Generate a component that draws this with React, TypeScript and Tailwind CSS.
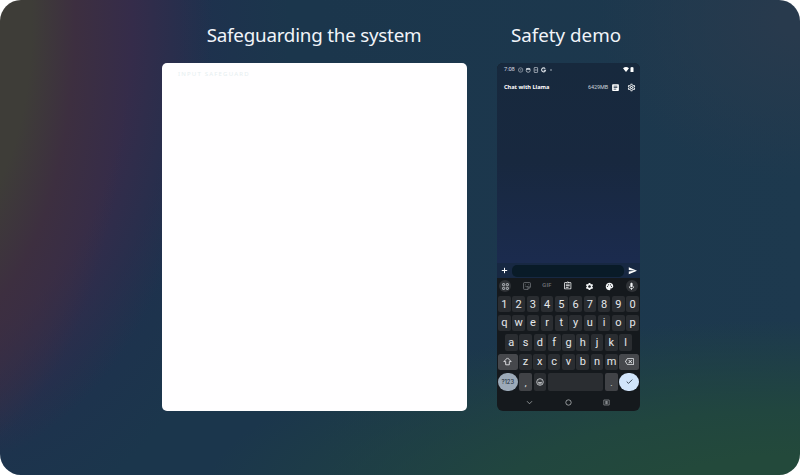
import React from 'react';
import { MdSettings, MdPalette, MdMic, MdSend, MdArticle } from 'react-icons/md';
import { MdOutlineSettings, MdOutlineBackspace, MdOutlineAssignment } from 'react-icons/md';

const key = 'flex items-center justify-center rounded-[2px] bg-[#2a2d31] text-[11px] leading-none text-[#e6e8eb]';

function Keys({ chars }: { chars: string }) {
  return (
    <>
      {chars.split('').map((c) => (
        <div key={c} className={`${key} w-[12.7px] shrink-0`}>{c}</div>
      ))}
    </>
  );
}

function StatusBar() {
  return (
    <div className="flex h-[13px] items-center pl-[7px] pr-[6px] text-[#d5dbe2]">
      <span className="w-[13.5px] whitespace-nowrap text-[5.8px] leading-none tracking-[-0.1px]">7:08</span>
      <svg className="h-[6px] w-[34px]" viewBox="0 0 34 6" fill="none" stroke="currentColor" strokeWidth=".7">
        <circle cx="2.6" cy="3" r="2.2" opacity=".7" />
        <path d="M1.7 2.4h1.8M1.8 3.8h1.6" strokeWidth=".5" opacity=".7" />
        <circle cx="10.2" cy="3.3" r="2" />
        <path d="M8.2 2h4" strokeWidth="1.4" />
        <rect x="16.2" y=".4" width="3.4" height="5.2" rx=".8" />
        <path d="M17 3h1.8" />
        <path d="M27.2 1.7A2 2 0 1 0 27.5 3.3H25.7" strokeWidth="1.1" />
        <circle cx="33" cy="3" r=".7" fill="currentColor" stroke="none" />
      </svg>
      <div className="ml-auto flex items-center gap-[1px] text-white">
        <svg className="h-[5px] w-[6px]" viewBox="0 0 6 5" fill="currentColor"><path d="M0 1.2Q3-1 6 1.2L3 5Z" /></svg>
        <svg className="h-[5px] w-[4px]" viewBox="0 0 4 5" fill="currentColor"><path d="M1.3 0h1.4v.6h.8V5H.5V.6h.8Z" /></svg>
      </div>
    </div>
  );
}

function Phone() {
  return (
    <div className="flex h-[348px] w-[143px] flex-col overflow-hidden rounded-[6px] bg-[#15191d] font-['Roboto',sans-serif]">
      <div className="flex h-[200px] shrink-0 flex-col bg-linear-to-b from-[#17293d] via-[#18283f] to-[#1b2b4e]">
        <StatusBar />
        <div className="mt-[5px] flex h-[13px] items-center pl-[7px] pr-1 text-white">
          <span className="whitespace-nowrap font-['Noto_Sans',sans-serif] text-[5.6px] font-bold leading-none">Chat with Llama</span>
          <span className="ml-auto w-[20px] whitespace-nowrap text-[5.5px] leading-none tracking-[-0.1px] text-[#cbd3db]">6429MB</span>
          <MdArticle className="ml-[3px] h-[9px] w-[9px]" />
          <MdOutlineSettings className="ml-[7px] h-[9px] w-[9px]" />
        </div>
      </div>
      <div className="flex h-[15px] shrink-0 items-center bg-[#172842] px-1 text-white">
        <svg className="h-[7px] w-[7px]" viewBox="0 0 7 7" stroke="currentColor" strokeWidth="1"><path d="M3.5.8v5.4M.8 3.5h5.4" /></svg>
        <div className="ml-1 h-[12px] w-[112px] rounded-[5px] bg-[#091b28]" />
        <MdSend className="ml-auto -mr-px h-[9.5px] w-[9.5px]" />
      </div>
      <div className="flex h-[17px] shrink-0 items-center justify-between pb-px pl-[2px] pr-[2px] text-[#f2f4f5]">
        <div className="flex h-[12px] w-[12px] items-center justify-center rounded-full bg-[#303337]">
          <svg className="h-[7px] w-[7px]" viewBox="0 0 7 7" fill="none" stroke="#b5b9bd" strokeWidth=".9">
            <rect x=".6" y=".6" width="2.1" height="2.1" rx=".4" /><rect x="4.3" y=".6" width="2.1" height="2.1" rx=".4" />
            <rect x=".6" y="4.3" width="2.1" height="2.1" rx=".4" /><rect x="4.3" y="4.3" width="2.1" height="2.1" rx=".4" />
          </svg>
        </div>
        <svg className="h-[8px] w-[8px]" viewBox="0 0 8 8" fill="none" stroke="#777b80" strokeWidth=".8">
          <path d="M1.3.6h5.4q.7 0 .7.7v3.8L5.1 7.4H1.3q-.7 0-.7-.7V1.3q0-.7.7-.7ZM5 7.2V5h2.2M2.4 2.7h.6M5 2.7h.6M2.3 4.1Q3.5 5.3 5 4.3" />
        </svg>
        <span className="text-[5.8px] font-medium leading-none tracking-[0.2px] text-[#73777c]">GIF</span>
        <MdOutlineAssignment className="h-[9.5px] w-[9.5px]" />
        <MdSettings className="h-[9px] w-[9px]" />
        <MdPalette className="h-[9px] w-[9px]" />
        <div className="flex h-[12px] w-[12px] items-center justify-center rounded-full bg-[#303337]"><MdMic className="h-[9px] w-[9px]" /></div>
      </div>
      <div className="flex flex-col px-px pt-px">
        <div className="flex h-[16px] justify-between"><Keys chars="1234567890" /></div>
        <div className="mt-[2.5px] flex h-[16.5px] justify-between"><Keys chars="qwertyuiop" /></div>
        <div className="mt-[3px] flex h-[16.5px] justify-between px-[7px]"><Keys chars="asdfghjkl" /></div>
        <div className="mt-[3px] flex h-[16.5px] justify-between">
          <div className="flex w-[19.5px] items-center justify-center rounded-[2.5px] bg-[#46484c]">
            <svg className="h-[9px] w-[9px]" viewBox="0 0 9 9" fill="none" stroke="#e6e8eb" strokeWidth=".9"><path d="M4.5.9 8.2 4.6H6.3V7.8H2.7V4.6H.8Z" strokeLinejoin="round" /></svg>
          </div>
          <Keys chars="zxcvbnm" />
          <div className="flex w-[19.5px] items-center justify-center rounded-[2.5px] bg-[#46484c]"><MdOutlineBackspace className="h-[9px] w-[9px] text-[#e6e8eb]" /></div>
        </div>
        <div className="mt-[2.5px] flex h-[18px] justify-between">
          <div className="flex w-[19.5px] items-center justify-center rounded-[9px] bg-[#9caab8] font-['Inter',sans-serif] text-[5.8px] font-medium leading-none text-[#27333f]">?123</div>
          <div className="flex w-[12.7px] items-center justify-center rounded-[2px] bg-[#414347] pt-1 text-[9px] leading-none text-[#e6e8eb]">,</div>
          <div className={`${key} w-[12.7px]`}>
            <svg className="h-[8px] w-[8px]" viewBox="0 0 8 8" fill="none" stroke="currentColor" strokeWidth=".75"><circle cx="4" cy="4" r="3.3" /><path d="M2.6 3h.6M4.8 3h.6M2.3 4.5h3.4Q5.4 6 4 6T2.3 4.5Z" /></svg>
          </div>
          <div className="w-[55px] rounded-[2px] bg-[#2a2d31]" />
          <div className="flex w-[12.7px] items-center justify-center rounded-[2px] bg-[#414347] pt-1 text-[9px] leading-none text-[#e6e8eb]">.</div>
          <div className="flex w-[19.5px] items-center justify-center rounded-[9px] bg-[#d2e5fb]">
            <svg className="h-[7px] w-[7px]" viewBox="0 0 7 7" fill="none" stroke="#26323e" strokeWidth=".85"><path d="m.7 3.6 1.8 1.8L6.3 1.6" /></svg>
          </div>
        </div>
      </div>
      <div className="mt-[8px] flex h-[8px] items-center justify-between pl-[29px] pr-[30px]">
        <svg className="h-[7px] w-[7px]" viewBox="0 0 7 7" fill="none" stroke="#a4a8ab" strokeWidth=".8"><path d="M1 2.2 3.5 4.8 6 2.2" /></svg>
        <svg className="h-[7px] w-[7px]" viewBox="0 0 7 7" fill="none" stroke="#b3b6b9" strokeWidth=".8"><circle cx="3.5" cy="3.5" r="2.7" /></svg>
        <svg className="h-[7px] w-[7px]" viewBox="0 0 7 7" fill="none" stroke="#85898d" strokeWidth=".8"><path d="M.8 1v5M6.2 1v5M.8 1h5.4M.8 6h5.4" /><rect x="2.3" y="1.8" width="2.4" height="3.4" fill="#85898d" stroke="none" /></svg>
      </div>
    </div>
  );
}

export default function App() {
  return (
    <div className="h-[475px] w-[800px] overflow-hidden bg-white">
      <main className="flex h-[475px] w-[800px] gap-[30px] overflow-hidden rounded-[21px] bg-[#1d394e] bg-[radial-gradient(ellipse_135px_310px_at_-60px_20px,#3e3d38_68%,#3d2f40_100%,transparent_142%),radial-gradient(ellipse_200px_330px_at_-60px_20px,#352c4a_96%,transparent_136%),radial-gradient(ellipse_280px_420px_at_-60px_20px,#1f304e_85%,transparent_125%),radial-gradient(ellipse_600px_180px_at_800px_500px,#23493b_25%,#21463f_50%,transparent_100%),radial-gradient(ellipse_200px_160px_at_800px_20px,#283a4d_10%,transparent_100%),linear-gradient(90deg,#1b364c_0%,#1b364c_40%,#1d394e_100%)] pl-[162px]">
        <section className="flex w-[305px] flex-col">
          <h1 className="flex h-[63px] items-center justify-center whitespace-nowrap pt-[7px] pr-[1px] font-['Noto_Sans',sans-serif] text-[18.8px] leading-none tracking-[-0.22px] text-[#f1f4f9]">Safeguarding the system</h1>
          <div className="h-[348px] rounded-[5px] bg-[#fffeff] pl-[16px] pt-[8px] font-['Noto_Sans',sans-serif] text-[6px] leading-none tracking-[1.2px] text-[#e6eef0]">INPUT SAFEGUARD</div>
        </section>
        <section className="flex w-[143px] flex-col">
          <h1 className="flex h-[63px] items-center justify-center whitespace-nowrap pt-[7px] pr-[5px] font-['Noto_Sans',sans-serif] text-[18.8px] leading-none text-[#f1f4f9]">Safety demo</h1>
          <Phone />
        </section>
      </main>
    </div>
  );
}
